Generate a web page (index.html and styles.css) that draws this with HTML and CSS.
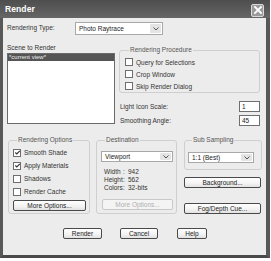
FILE: index.html
```html
<!DOCTYPE html>
<html>
<head>
<meta charset="utf-8">
<link rel="stylesheet" href="styles.css">
</head>
<body>
<div class="window">
  <div class="titlebar">
    <span class="title">Render</span>
    <span class="close"><svg width="10" height="10" viewBox="0 0 10 10"><path d="M2 2 L8 8 M8 2 L2 8" stroke="#fff" stroke-width="1.8" stroke-linecap="square"/></svg></span>
  </div>
  <div class="client">
    <div class="row-type">
      <span class="type-label">Rendering Type:</span>
      <div class="select sel-type"><span class="sel-text">Photo Raytrace</span><span class="arrow"><svg width="6" height="4" viewBox="0 0 6 4"><path d="M0.5 0.5 L3 3 L5.5 0.5" stroke="#555" fill="none" stroke-width="1"/></svg></span></div>
    </div>
    <div class="section2">
      <div class="scene">
        <div class="scene-label">Scene to Render</div>
        <div class="listbox"><div class="item-sel">*current view*</div></div>
      </div>
      <div class="right">
        <fieldset class="grp proc">
          <legend>Rendering Procedure</legend>
          <div class="chk-row"><span class="box"></span>Query for Selections</div>
          <div class="chk-row"><span class="box"></span>Crop Window</div>
          <div class="chk-row"><span class="box"></span>Skip Render Dialog</div>
        </fieldset>
        <div class="field-row first"><span>Light Icon Scale:</span><span class="input">1</span></div>
        <div class="field-row"><span>Smoothing Angle:</span><span class="input">45</span></div>
      </div>
    </div>
    <div class="section3">
      <fieldset class="grp opts">
        <legend>Rendering Options</legend>
        <div class="chk-row tall"><span class="box"><svg width="7" height="7" viewBox="0 0 7 7"><path d="M1.3 3.5 L2.8 5 L5.8 1.8" stroke="#333" fill="none" stroke-width="1.1"/></svg></span>Smooth Shade</div>
        <div class="chk-row tall"><span class="box"><svg width="7" height="7" viewBox="0 0 7 7"><path d="M1.3 3.5 L2.8 5 L5.8 1.8" stroke="#333" fill="none" stroke-width="1.1"/></svg></span>Apply Materials</div>
        <div class="chk-row tall"><span class="box"></span>Shadows</div>
        <div class="chk-row tall"><span class="box"></span>Render Cache</div>
        <div class="btn btn-more">More Options...</div>
      </fieldset>
      <fieldset class="grp dest">
        <legend>Destination</legend>
        <div class="select sel-dest"><span class="sel-text">Viewport</span><span class="arrow"><svg width="6" height="4" viewBox="0 0 6 4"><path d="M0.5 0.5 L3 3 L5.5 0.5" stroke="#555" fill="none" stroke-width="1"/></svg></span></div>
        <div class="info">
          <span>Width</span><span>:</span><span>942</span>
          <span>Height</span><span>:</span><span>562</span>
          <span>Colors</span><span>:</span><span>32-bits</span>
        </div>
        <div class="btn btn-disabled">More Options...</div>
      </fieldset>
      <div class="subcol">
        <fieldset class="grp sub">
          <legend>Sub Sampling</legend>
          <div class="select sel-sub"><span class="sel-text">1:1 (Best)</span><span class="arrow"><svg width="6" height="4" viewBox="0 0 6 4"><path d="M0.5 0.5 L3 3 L5.5 0.5" stroke="#555" fill="none" stroke-width="1"/></svg></span></div>
        </fieldset>
        <div class="btn btn-bg">Background...</div>
        <div class="btn btn-fog">Fog/Depth Cue...</div>
      </div>
    </div>
    <div class="bottom">
      <div class="btn b-render">Render</div>
      <div class="btn b-cancel">Cancel</div>
      <div class="btn b-help">Help</div>
    </div>
  </div>
</div>
</body>
</html>
```
FILE: styles.css
```css
html, body {
  margin: 0;
  padding: 0;
  background: #ffffff;
}
body {
  font-family: "Liberation Sans", Arial, sans-serif;
  font-size: 6.5px;
  color: #333;
}
.window {
  width: 270px;
  height: 258px;
  box-sizing: border-box;
  border-left: 3px solid #585858;
  border-right: 4px solid #585858;
  border-bottom: 3px solid #4a4a4a;
  background: #ececec;
  display: flex;
  flex-direction: column;
}
.titlebar {
  height: 18px;
  margin: 0 -4px 0 -3px;
  background: linear-gradient(#4e4e4e, #5c5c5c 60%, #666);
  display: flex;
  align-items: center;
  justify-content: space-between;
  padding: 0 6px 0 5px;
}
.title {
  color: #fff;
  font-weight: bold;
  font-size: 8.5px;
  letter-spacing: 0.1px;
}
.close {
  width: 11px;
  height: 11px;
  margin-top: 2px;
  border: 1px solid #d8d8d8;
  border-radius: 2px;
  background: #9a9a9a;
  display: flex;
  align-items: center;
  justify-content: center;
}
.client {
  padding: 4px 0 0 4px;
  display: flex;
  flex-direction: column;
}
.row-type {
  display: flex;
  align-items: center;
  height: 13px;
}
.type-label {
  width: 68px;
  margin-top: -2px;
}
.select {
  box-sizing: border-box;
  background: #fff;
  border: 1px solid #a8a8a8;
  display: flex;
  align-items: center;
  justify-content: space-between;
}
.sel-text {
  padding-left: 3px;
  color: #222;
}
.arrow {
  width: 11px;
  align-self: stretch;
  margin: 1px;
  background: #e4e4e4;
  border-radius: 1px;
  display: flex;
  align-items: center;
  justify-content: center;
}
.sel-type {
  width: 88px;
  height: 13px;
}
.section2 {
  display: flex;
  margin-top: 7px;
}
.scene {
  width: 108px;
}
.scene-label {
  height: 11px;
  line-height: 11px;
}
.listbox {
  box-sizing: border-box;
  height: 71px;
  background: #fff;
  border: 1px solid #6a6a6a;
}
.item-sel {
  height: 7px;
  line-height: 7px;
  background: #555;
  color: #eee;
  padding-left: 1px;
  font-size: 6px;
}
.right {
  margin-left: 4px;
  width: 141px;
  display: flex;
  flex-direction: column;
}
.grp {
  margin: 0;
  padding: 0;
  border: 1px solid #cfcfcf;
  border-radius: 3px;
  min-width: 0;
}
.grp legend {
  margin-left: 4px;
  padding: 0 1px;
  height: 8px;
  line-height: 8px;
  color: #555;
}
.proc {
  margin-top: 4px;
  height: 47px;
  box-sizing: border-box;
  padding: 2px 0 0 5px;
}
.chk-row {
  display: flex;
  align-items: center;
  height: 12px;
}
.chk-row.tall {
  height: 13px;
}
.box {
  box-sizing: border-box;
  width: 8px;
  height: 8px;
  border: 1px solid #6e6e6e;
  background: #fff;
  margin-right: 3px;
  display: flex;
  align-items: center;
  justify-content: center;
}
.box svg {
  flex: none;
}
.field-row {
  display: flex;
  align-items: center;
  justify-content: space-between;
  height: 11px;
  padding-left: 1px;
  margin-top: 3px;
}
.field-row.first {
  margin-top: 8px;
}
.input {
  box-sizing: border-box;
  width: 21px;
  height: 11px;
  line-height: 9px;
  background: #fff;
  border: 1px solid #6e6e6e;
  padding-left: 2px;
  color: #222;
}
.section3 {
  display: flex;
  align-items: flex-start;
  margin-top: 10px;
}
.opts {
  margin-left: 1px;
  width: 82px;
  height: 78px;
  box-sizing: border-box;
  padding: 2px 0 0 4px;
}
.btn {
  box-sizing: border-box;
  height: 11px;
  border: 1px solid #4a4a4a;
  border-radius: 2px;
  background: linear-gradient(#ffffff, #f2f2f2 60%, #e2e2e2);
  display: flex;
  align-items: center;
  justify-content: center;
  color: #222;
}
.btn-more {
  width: 73px;
  margin-top: 2px;
}
.dest {
  margin-left: 6px;
  width: 81px;
  height: 78px;
  box-sizing: border-box;
  padding: 7px 0 0 4px;
}
.sel-dest {
  width: 72px;
  height: 11px;
}
.info {
  display: grid;
  grid-template-columns: 19px 5px auto;
  grid-auto-rows: 8px;
  line-height: 8px;
  margin: 6px 0 0 3px;
}
.btn-disabled {
  width: 71px;
  margin: 7px 0 0 1px;
  border-color: #c8c8c8;
  background: #f4f4f4;
  color: #b0b0b0;
}
.subcol {
  margin-left: 7px;
  width: 78px;
  display: flex;
  flex-direction: column;
}
.sub {
  height: 34px;
  box-sizing: border-box;
  padding: 8px 0 0 3px;
}
.sel-sub {
  width: 66px;
  height: 11px;
}
.btn-bg {
  width: 77px;
  margin-top: 7px;
}
.btn-fog {
  width: 77px;
  margin-top: 15px;
}
.bottom {
  display: flex;
  margin-top: 14px;
  margin-left: 56px;
}
.bottom .btn {
  height: 11px;
}
.b-render { width: 39px; }
.b-cancel { width: 38px; margin-left: 18px; }
.b-help { width: 30px; margin-left: 19px; }
```
